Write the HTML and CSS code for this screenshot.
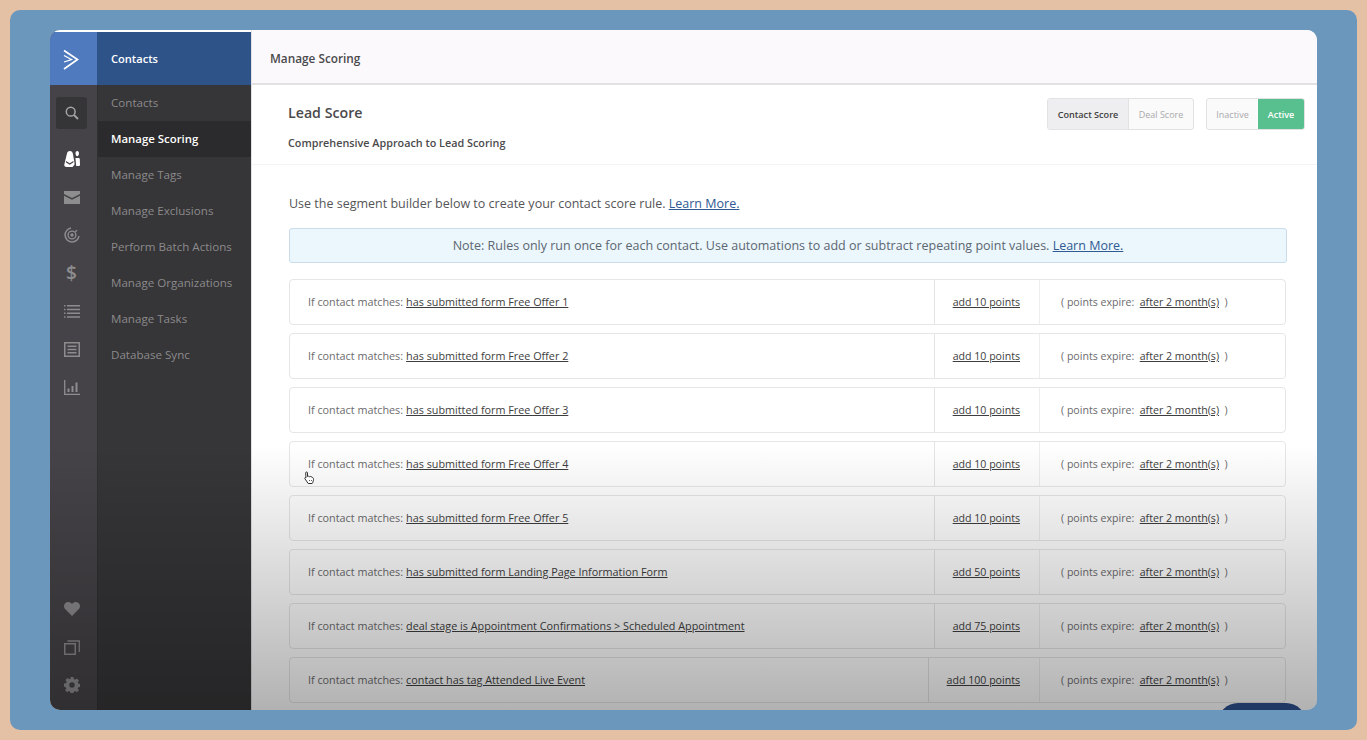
FILE: index.html
```html
<!DOCTYPE html>
<html lang="en">
<head>
<meta charset="utf-8">
<title>Manage Scoring</title>
<link rel="stylesheet" href="styles.css">
</head>
<body>
<div class="frame">
  <div class="app">
    <aside class="rail">
      <div class="logo">
        <svg width="18" height="22" viewBox="0 0 18 22"><path d="M2 1.500 15.500 10.500 2 20" fill="none" stroke="#fff" stroke-width="1.700"/><path d="M2 6.500 9.500 10.500 2 13" fill="none" stroke="#fff" stroke-width="1.300"/></svg>
      </div>
      <div class="rail-top">
        <div class="search">
          <svg width="14" height="14" viewBox="0 0 14 14"><circle cx="5.700" cy="5.700" r="4.400" fill="none" stroke="#a5a4a6" stroke-width="1.500"/><path d="M9 9 13 13" stroke="#a5a4a6" stroke-width="1.800"/></svg>
        </div>
        <div class="rail-icon"><svg width="16" height="16" viewBox="0 0 16 16"><path fill="#fff" d="M6 0c1.800 0 2.800 1.300 3 3.200L10.500 12c.2 1.300 0 2-.9 2.800L8.500 16H2.800C1 16 0 15 .3 13.500L2.800 3.200C3.200 1.200 4.200 0 6 0Z"/><path fill="#454347" d="M2 10 5.800 12.300 9.300 10 9.500 11.300 5.800 13.700 1.800 11.300Z"/><path fill="#fff" d="M13.200 0c1.200 0 1.800 1 1.800 2.300 0 1.400-.7 3-1.800 3-1.100 0-1.700-1.600-1.700-3C11.500 1 12 0 13.200 0ZM11.400 7h3.200c.8 0 1.100.6 1.200 1.400l.2 5c.1.900-.3 1.500-1.100 1.500h-2.700Z"/></svg></div>
        <div class="rail-icon"><svg width="16" height="13" viewBox="0 0 16 13"><path fill="#8d8c8e" d="M0 0h16v3L8 7 0 3Z"/><path fill="#8d8c8e" d="M0 4.700 8 8.700 16 4.700V13H0Z"/></svg></div>
        <div class="rail-icon"><svg width="16" height="16" viewBox="0 0 16 16"><path d="M7 1.100A7 7 0 1 0 15 9" fill="none" stroke="#8d8c8e" stroke-width="1.500"/><path d="M13 3.200 11.300 4.800" stroke="#8d8c8e" stroke-width="1.500"/><circle cx="8" cy="8" r="3.900" fill="none" stroke="#8d8c8e" stroke-width="1.400"/><circle cx="8" cy="8" r="1.700" fill="#8d8c8e"/></svg></div>
        <div class="rail-icon dollar">$</div>
        <div class="rail-icon"><svg width="16" height="13" viewBox="0 0 16 13"><path fill="#8d8c8e" d="M0 0h1.500v1.500H0zM3 0h13v1.500H3zM0 3.700h1.500v1.500H0zM3 3.700h13v1.500H3zM0 7.500h1.500V9H0zM3 7.500h13V9H3zM0 11.200h1.500v1.500H0zM3 11.200h13v1.500H3z"/></svg></div>
        <div class="rail-icon"><svg width="16" height="15" viewBox="0 0 16 15"><rect x=".750" y=".750" width="14.500" height="13.500" fill="none" stroke="#8d8c8e" stroke-width="1.500"/><path fill="#8d8c8e" d="M3.500 3.500h9V5h-9zM3.500 6.700h9v1.500h-9zM3.500 10h9v1.500h-9z"/></svg></div>
        <div class="rail-icon"><svg width="16" height="15" viewBox="0 0 16 15"><path fill="none" stroke="#8d8c8e" stroke-width="1.300" d="M.700 0V14.300H16"/><path fill="#8d8c8e" d="M3.500 8.500h2V12h-2zM7.500 6h2v6h-2zM11.500 2.500h2V12h-2z"/></svg></div>
      </div>
      <div class="rail-bottom">
        <div class="rail-icon"><svg width="16" height="14" viewBox="0 0 16 14"><path fill="#8d8c8e" d="M8 14 1.300 7.300C-.4 5.500-.4 2.900 1.200 1.300 2.900-.4 5.600-.4 7.200 1.300L8 2.100l.8-.8c1.600-1.700 4.300-1.700 6 0 1.600 1.600 1.600 4.200-.1 6Z"/></svg></div>
        <div class="rail-icon"><svg width="16" height="15" viewBox="0 0 16 15"><rect x=".750" y="3.750" width="10.500" height="10.500" fill="none" stroke="#8d8c8e" stroke-width="1.500"/><path fill="none" stroke="#8d8c8e" stroke-width="1.300" d="M3.500 1H15.300V12"/></svg></div>
        <div class="rail-icon"><svg width="16" height="16" viewBox="0 0 16 16"><path fill="#8d8c8e" fill-rule="evenodd" d="M6.600 0h2.800l.4 2.100 1.300.6L12.900 1.500l2 2-1.200 1.800.6 1.300 2.100.4v2.800l-2.100.4-.6 1.300 1.200 1.800-2 2-1.800-1.200-1.300.6-.4 2.100H6.600l-.4-2.100-1.300-.6-1.800 1.200-2-2 1.200-1.800-.6-1.300L0 9.400V6.600l2.100-.4.6-1.300-1.200-1.800 2-2 1.800 1.200 1.300-.6ZM8 5.300a2.700 2.700 0 1 0 0 5.400 2.700 2.700 0 0 0 0-5.400Z"/></svg></div>
      </div>
    </aside>

    <nav class="subnav">
      <div class="subnav-title">Contacts</div>
      <a class="subnav-item">Contacts</a>
      <a class="subnav-item is-active">Manage Scoring</a>
      <a class="subnav-item">Manage Tags</a>
      <a class="subnav-item">Manage Exclusions</a>
      <a class="subnav-item">Perform Batch Actions</a>
      <a class="subnav-item">Manage Organizations</a>
      <a class="subnav-item">Manage Tasks</a>
      <a class="subnav-item">Database Sync</a>
    </nav>

    <main class="main">
      <header class="topbar">Manage Scoring</header>
      <section class="score-head">
        <div class="score-titles">
          <h1>Lead Score</h1>
          <h2>Comprehensive Approach to Lead Scoring</h2>
        </div>
        <div class="toggles">
          <div class="toggle">
            <span class="toggle-btn btn-contact is-selected">Contact Score</span>
            <span class="toggle-btn btn-deal">Deal Score</span>
          </div>
          <div class="toggle">
            <span class="toggle-btn btn-inactive">Inactive</span>
            <span class="toggle-btn btn-active">Active</span>
          </div>
        </div>
      </section>
      <section class="content">
        <p class="intro">Use the segment builder below to create your contact score rule. <a class="learn">Learn More.</a></p>
        <div class="note">Note: Rules only run once for each contact. Use automations to add or subtract repeating point values. <a class="learn">Learn More.</a></div>
        <div class="rules">
          <div class="rule"><div class="rule-cond">If contact matches: <a>has submitted form Free Offer 1</a></div><div class="rule-pts"><a>add 10 points</a></div><div class="rule-exp">( points expire: &nbsp;<a>after 2 month(s)</a> &nbsp;)</div></div>
          <div class="rule"><div class="rule-cond">If contact matches: <a>has submitted form Free Offer 2</a></div><div class="rule-pts"><a>add 10 points</a></div><div class="rule-exp">( points expire: &nbsp;<a>after 2 month(s)</a> &nbsp;)</div></div>
          <div class="rule"><div class="rule-cond">If contact matches: <a>has submitted form Free Offer 3</a></div><div class="rule-pts"><a>add 10 points</a></div><div class="rule-exp">( points expire: &nbsp;<a>after 2 month(s)</a> &nbsp;)</div></div>
          <div class="rule"><div class="rule-cond">If contact matches: <a>has submitted form Free Offer 4</a></div><div class="rule-pts"><a>add 10 points</a></div><div class="rule-exp">( points expire: &nbsp;<a>after 2 month(s)</a> &nbsp;)</div></div>
          <div class="rule"><div class="rule-cond">If contact matches: <a>has submitted form Free Offer 5</a></div><div class="rule-pts"><a>add 10 points</a></div><div class="rule-exp">( points expire: &nbsp;<a>after 2 month(s)</a> &nbsp;)</div></div>
          <div class="rule"><div class="rule-cond">If contact matches: <a>has submitted form Landing Page Information Form</a></div><div class="rule-pts"><a>add 50 points</a></div><div class="rule-exp">( points expire: &nbsp;<a>after 2 month(s)</a> &nbsp;)</div></div>
          <div class="rule"><div class="rule-cond">If contact matches: <a>deal stage is Appointment Confirmations &gt; Scheduled Appointment</a></div><div class="rule-pts"><a>add 75 points</a></div><div class="rule-exp">( points expire: &nbsp;<a>after 2 month(s)</a> &nbsp;)</div></div>
          <div class="rule"><div class="rule-cond">If contact matches: <a>contact has tag Attended Live Event</a></div><div class="rule-pts"><a>add 100 points</a></div><div class="rule-exp">( points expire: &nbsp;<a>after 2 month(s)</a> &nbsp;)</div></div>
        </div>
      </section>
    </main>

    <div class="shade"></div>
    <div class="chat-pill"></div>
    <svg class="cursor" width="11" height="14" viewBox="0 0 11 14"><path fill="#fff" stroke="#333" stroke-width="1" d="M2.500 1c.7 0 1 .4 1 1v3.500l1-.3 1 .5 1.200-.2 1.300.6c1 .4 1.500 1.200 1.500 2.200 0 1-.2 2-.7 3l-.6 1.200H4.200L1.800 9 .8 7.500c-.3-.6.300-1.200 1-.8l.2.200L1.700 2c0-.6.200-1 .8-1Z"/><path d="M5 9h.8v1H5zM7 9h.8v1H7z" fill="#333"/></svg>
  </div>
</div>
</body>
</html>
```
FILE: styles.css
```css
* { box-sizing: border-box; }
html, body { margin: 0; height: 100%; }
body {
  background: #e4c0a4;
  padding: 10px;
  font-family: "Open Sans", "Liberation Sans", sans-serif;
  overflow: hidden;
}
.frame {
  width: 1347px;
  height: 720px;
  background: #6c97bc;
  border-radius: 10px;
  padding: 20px 40px;
}
.app {
  position: relative;
  display: flex;
  width: 1267px;
  height: 680px;
  background: #fff;
  border-radius: 10px;
  overflow: hidden;
}

/* icon rail */
.rail {
  width: 47px;
  flex-shrink: 0;
  margin-top: 2px;
  background: #454347;
  display: flex;
  flex-direction: column;
}
.logo {
  height: 53px;
  background: #4f7abd;
  display: flex;
  align-items: center;
  justify-content: center;
  padding: 2px 6px 0 0;
}
.rail-top { padding-top: 12px; flex: 1; }
.search {
  width: 31px;
  height: 32px;
  margin: 0 0 11px 6px;
  background: #353436;
  border-radius: 3px;
  display: flex;
  align-items: center;
  justify-content: center;
}
.rail-icon {
  height: 38px;
  display: flex;
  align-items: center;
  justify-content: center;
  padding-right: 4px;
}
.dollar { color: #8d8c8e; font-size: 19px; font-weight: 600; }
.rail-bottom { padding-bottom: 6px; }

/* sub navigation */
.subnav {
  width: 154px;
  flex-shrink: 0;
  margin-top: 2px;
  background: #363537;
  border-left: 1px solid #302f31;
}
.subnav-title {
  height: 53px;
  margin-left: -1px;
  background: #2e5389;
  color: #fff;
  font-size: 11.100px;
  font-weight: 600;
  padding-left: 14px;
  display: flex;
  align-items: center;
}
.subnav-item {
  display: flex;
  align-items: center;
  height: 36px;
  padding: 0 0 1px 13px;
  color: #8b8a8c;
  font-size: 11.600px;
}
.subnav-item.is-active {
  background: #2b2a2c;
  color: #fff;
  font-size: 11.400px;
  font-weight: 600;
}

/* main panel */
.main { flex: 1; min-width: 0; border-left: 1px solid #e2e2e4; }
.topbar {
  height: 55px;
  background: #fcf9fc;
  border-bottom: 2px solid #e2e1e4;
  color: #4a4a4c;
  font-size: 11.800px;
  font-weight: 600;
  padding: 3px 0 0 18px;
  display: flex;
  align-items: center;
}
.score-head {
  height: 80px;
  border-bottom: 1px solid #f3f3f4;
  padding: 13px 12px 0 36px;
  display: flex;
  justify-content: space-between;
  align-items: flex-start;
}
.score-titles h1 {
  margin: 0;
  font-size: 14.200px;
  font-weight: 600;
  line-height: 30px;
  color: #4a4a4c;
}
.score-titles h2 {
  margin: 7px 0 0;
  font-size: 10.800px;
  font-weight: 600;
  line-height: 16px;
  color: #4a4a4c;
}
.toggles { display: flex; gap: 12px; }
.toggle {
  display: flex;
  height: 32px;
  border: 1px solid #e2e1e4;
  border-radius: 3px;
  overflow: hidden;
  background: #fbfafb;
}
.toggle-btn {
  display: flex;
  align-items: center;
  justify-content: center;
  font-size: 9px;
  color: #a9a9ab;
}
.btn-contact { width: 81px; font-size: 9.100px; }
.btn-deal { width: 64px; }
.btn-inactive { width: 51px; }
.btn-active { width: 46px; background: #58c08e; color: #fff; font-weight: 600; }
.toggle-btn.is-selected {
  background: #eeeef0;
  color: #403f41;
  font-weight: 600;
  border-right: 1px solid #e2e1e4;
}
.content { padding: 0 30px 0 37px; }
.intro {
  margin: 0;
  padding-top: 29px;
  font-size: 12.500px;
  line-height: 20px;
  color: #555557;
}
.learn { color: #2f5a92; text-decoration: underline; }
.note {
  margin: 14px 0 16px;
  height: 35px;
  width: 998px;
  background: #ebf6fd;
  border: 1px solid #c9dcea;
  border-radius: 3px;
  font-size: 12.500px;
  line-height: 34px;
  color: #5c6670;
  text-align: center;
}
.rules { display: flex; flex-direction: column; gap: 8px; width: 997px; }
.rule {
  display: flex;
  height: 46px;
  background: #fff;
  border: 1px solid #e6e6e8;
  border-radius: 4px;
  font-size: 10.600px;
  color: #6b6b6d;
  align-items: stretch;
  white-space: nowrap;
}
.rule a { color: #3e3e40; text-decoration: underline; }
.rule-cond {
  flex: 1;
  font-size: 10.800px;
  padding: 0 0 2px 18px;
  display: flex;
  align-items: center;
  gap: 3px;
}
.rule-pts {
  padding: 0 19px 0 18px;
  border-left: 1px solid #e4e4e6;
  border-right: 1px solid #eeeeef;
  display: flex;
  align-items: center;
}
.rule-exp {
  width: 245px;
  padding-left: 21px;
  display: flex;
  align-items: center;
  white-space: pre;
}

/* overlays */
.shade {
  position: absolute;
  left: 0;
  right: 0;
  top: 415px;
  bottom: 0;
  background: linear-gradient(to bottom, rgba(0,0,0,0), rgba(0,0,0,.3));
  pointer-events: none;
}
.chat-pill {
  position: absolute;
  left: 1168px;
  top: 673px;
  width: 88px;
  height: 40px;
  border-radius: 20px;
  background: #1f3864;
}
.cursor {
  position: absolute;
  left: 254px;
  top: 441px;
}
```
